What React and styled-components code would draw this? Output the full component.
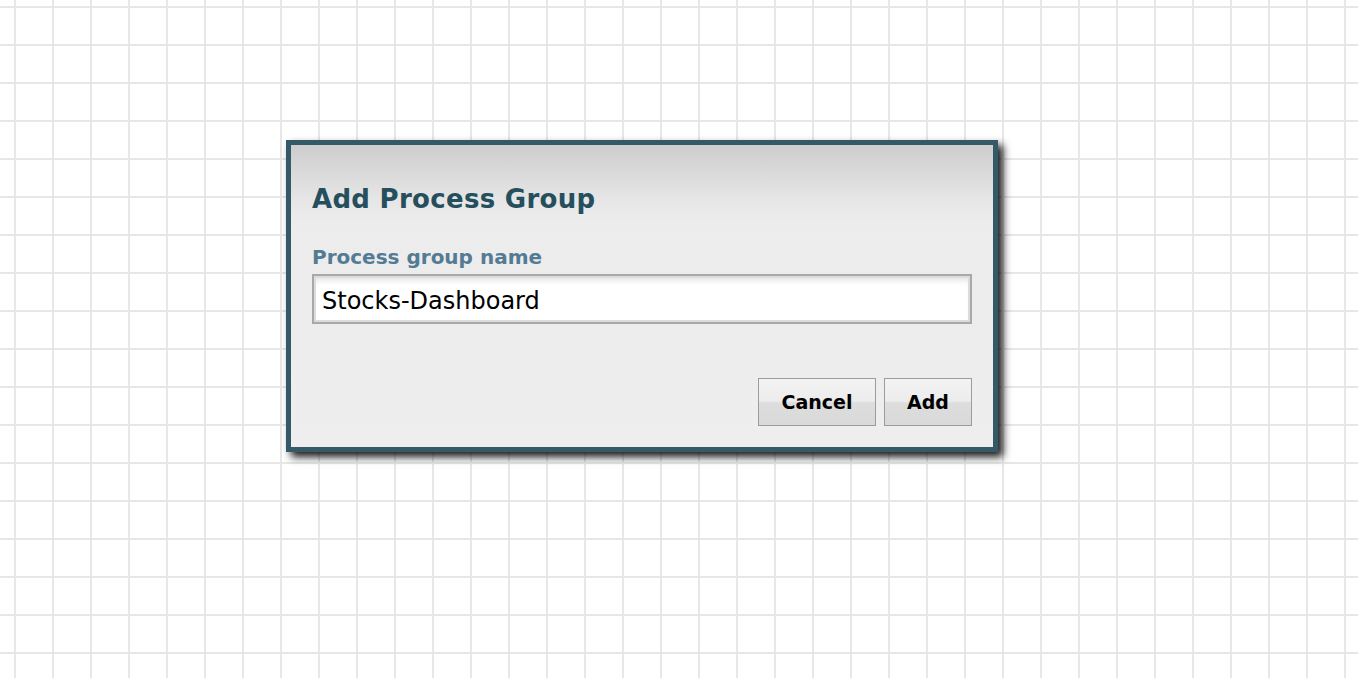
import styled, { createGlobalStyle } from "styled-components";

const GlobalStyle = createGlobalStyle`
  html, body {
    margin: 0;
    padding: 0;
    height: 100%;
  }
  body {
    font-family: "DejaVu Sans", Verdana, sans-serif;
  }
`;

const Canvas = styled.div`
  width: 100vw;
  height: 100vh;
  box-sizing: border-box;
  padding: 140px 0 0 286px;
  background-color: #fff;
  background-image: linear-gradient(to right, #e7e7e7 2px, transparent 2px),
    linear-gradient(to bottom, #e7e7e7 2px, transparent 2px);
  background-size: 38px 38px;
  background-position: 14px 6px;
`;

const Dialog = styled.div`
  width: 712px;
  height: 312px;
  box-sizing: border-box;
  border: 5px solid #345a68;
  background: linear-gradient(to bottom, #cdcdcd 0px, #e6e6e6 55px, #ececec 75px, #eeeeee 100%);
  box-shadow: 5px 5px 8px rgba(0, 0, 0, 0.9);
  padding: 0 21px 21px;
  display: flex;
  flex-direction: column;
`;

const Title = styled.h2`
  margin: 0;
  padding-top: 39px;
  font-size: 26px;
  line-height: 30px;
  font-weight: bold;
  letter-spacing: 0.3px;
  color: #264f5d;
`;

const Label = styled.label`
  display: block;
  margin-top: 31px;
  font-size: 20px;
  line-height: 24px;
  font-weight: bold;
  color: #547b94;
`;

const Input = styled.input`
  display: block;
  margin-top: 5px;
  width: 100%;
  height: 50px;
  box-sizing: border-box;
  border: 2px solid #a8a8a8;
  background: #fff;
  box-shadow: inset 0 0 0 2px #dcdcdc, inset 0 6px 6px -2px rgba(0, 0, 0, 0.12);
  padding: 3px 8px 0;
  font-family: "DejaVu Sans", Verdana, sans-serif;
  font-size: 24px;
  color: #000;
  outline: none;
`;

const Actions = styled.div`
  margin-top: auto;
  display: flex;
  justify-content: flex-end;
  gap: 8px;
`;

const Button = styled.button`
  height: 48px;
  width: ${(p) => p.$w}px;
  box-sizing: border-box;
  border: 1px solid #9c9c9c;
  background: linear-gradient(to bottom, #f3f3f3 0%, #ececec 48%, #dddddd 52%, #d9d9d9 100%);
  font-family: "DejaVu Sans", Verdana, sans-serif;
  font-size: 19px;
  font-weight: bold;
  color: #000;
  padding: 0;
`;

export default function App() {
  return (
    <>
      <GlobalStyle />
      <Canvas>
        <Dialog>
          <Title>Add Process Group</Title>
          <Label>Process group name</Label>
          <Input defaultValue="Stocks-Dashboard" />
          <Actions>
            <Button $w={118}>Cancel</Button>
            <Button $w={88}>Add</Button>
          </Actions>
        </Dialog>
      </Canvas>
    </>
  );
}
